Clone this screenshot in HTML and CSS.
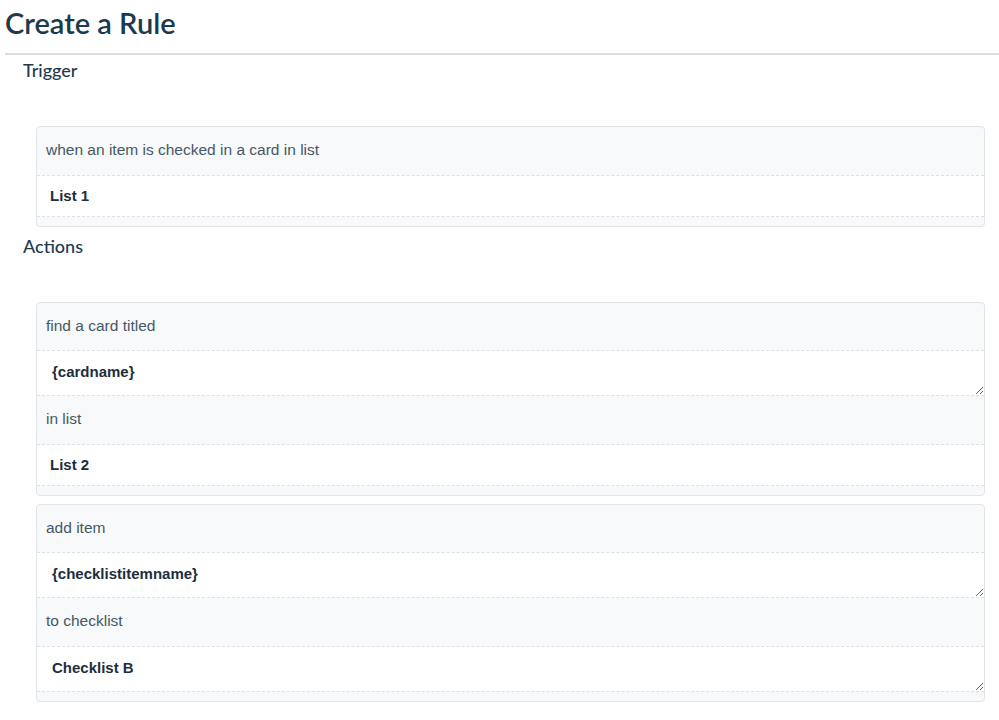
FILE: index.html
```html
<!DOCTYPE html>
<html lang="en">
<head>
  <meta charset="UTF-8">
  <meta name="viewport" content="width=device-width, initial-scale=1.0">
  <title>Create a Rule</title>
  <link rel="stylesheet" href="styles.css">
</head>
<body>
  <h1 class="page-title">Create a Rule</h1>

  <div class="rule">
    <h3 class="section-title">Trigger</h3>
    <div class="rule-card">
      <div class="rule-label">when an item is checked in a card in list</div>
      <div class="rule-select">List 1</div>
    </div>

    <h3 class="section-title">Actions</h3>
    <div class="rule-card">
      <div class="rule-label">find a card titled</div>
      <textarea class="rule-input" rows="1">{cardname}</textarea>
      <div class="rule-label">in list</div>
      <div class="rule-select">List 2</div>
    </div>
    <div class="rule-card">
      <div class="rule-label">add item</div>
      <textarea class="rule-input" rows="1">{checklistitemname}</textarea>
      <div class="rule-label">to checklist</div>
      <textarea class="rule-input" rows="1">Checklist B</textarea>
    </div>
  </div>
</body>
</html>
```

FILE: styles.css
```css
/* base */
body {
  margin: 0;
  font-family: "Liberation Sans", Arial, sans-serif;
  background: #fff;
  color: #1d2e3d;
}

/* header */
.page-title {
  margin: 6px 0 0 5px;
  padding-bottom: 13px;
  font-family: Lato, "Open Sans", sans-serif;
  font-size: 29px;
  line-height: 34px;
  font-weight: 600;
  color: #1b3a4f;
  border-bottom: 2px solid #dedede;
}

/* rule body */
.rule {
  padding: 0 14px 0 23px;
}

.section-title {
  margin: 4px 0 45px;
  font-family: Lato, "Open Sans", sans-serif;
  font-size: 18px;
  line-height: 22px;
  font-weight: 500;
  color: #1b3a4f;
}

.rule-card + .section-title {
  margin-top: 7px;
}

.rule-card {
  margin: 0 0 8px 13px;
  padding-bottom: 9px;
  background: #f8f9fa;
  border: 1px solid #e1e4e8;
  border-radius: 4px;
}

.rule-label {
  padding: 13px 9px 14.5px;
  font-size: 15.5px;
  line-height: 20px;
  color: #455866;
}

.rule-select,
.rule-input {
  display: block;
  box-sizing: border-box;
  width: 100%;
  margin: 0;
  background: #fff;
  border: none;
  border-top: 1px dashed #dcdfe3;
  border-bottom: 1px dashed #dcdfe3;
  font-family: "Liberation Sans", Arial, sans-serif;
  font-size: 15px;
  line-height: 20px;
  font-weight: 700;
  color: #1d2e3d;
}

.rule-select {
  padding: 10px 13px;
}

.rule-input {
  height: 46px;
  padding: 11px 15px 13px;
  resize: vertical;
  outline: none;
}
```
